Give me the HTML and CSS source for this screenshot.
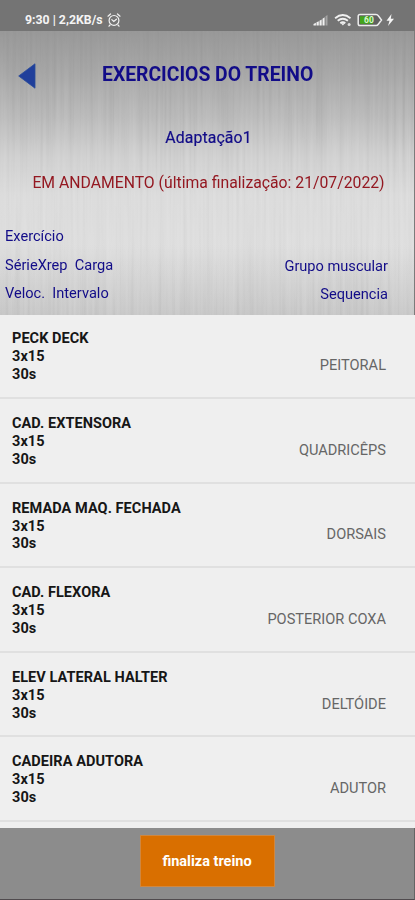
FILE: index.html
```html
<!DOCTYPE html>
<html lang="pt-BR">
<head>
<meta charset="utf-8">
<title>Exercicios do treino</title>
<link rel="stylesheet" href="styles.css">
</head>
<body>
<div class="app">
  <div class="status">
    <span class="clock">9:30 | 2,2KB/s</span>
    <svg class="alarm" width="14" height="14" viewBox="0 0 14 14" fill="none" stroke="#f2f2f2" stroke-width="1.2" stroke-linecap="round"><circle cx="7" cy="7.4" r="4.9"/><path d="M1 3.2 3.5 1M13 3.2 10.5 1M3 12l-1 1.2M11 12l1 1.2M4.8 6.6 6.8 8.4 9.4 6.2"/></svg>
    <svg class="icons" width="84" height="16" viewBox="0 0 84 16">
      <g transform="translate(1.5 0)">
        <g fill="#f0f0f0"><path d="M1 13.5v-1.6l2.4-1.2v2.8zM4 13.5v-3.2l2.3-1.1v4.3zM7 13.5V8.7l2.2-1.3v6.1zM10 13.5V6.7l2.1-1.5v8.3z"/><path d="M13 13.5V4.3l2-1.3v10.5z" opacity=".4"/></g>
        <g fill="none" stroke="#f0f0f0" stroke-width="1.8"><path d="M22.6 6.2q7.7-6.4 15.4 0M25.2 8.8q5.1-4.2 10.2 0M27.8 11.2q2.5-2 5 0"/></g>
        <path d="m28.4 11.2 2 2.4 2-2.4z" fill="#f0f0f0"/><circle cx="36.6" cy="12.4" r="1.5" fill="#ddd"/>
      </g>
      <path d="M49 2.5h16q1.5 0 2.5 1.5l3 4-3 4q-1 1.5-2.5 1.5H49q-1.8 0-1.8-1.8V4.3q0-1.8 1.8-1.8z" fill="#606060" stroke="#ededed" stroke-width="1.5"/>
      <path d="M49 4.3h13v7.5H49z" fill="#43a51b"/>
      <text x="53" y="11.1" class="charge">60</text>
      <path d="m80.5 2-5 6.8h3L77 14l6-7.2h-3.2z" fill="#f5f5f5"/>
    </svg>
  </div>
  <header class="header">
    <svg class="brushed" width="414" height="284">
      <filter id="grain" x="0" y="0" width="100%" height="100%" color-interpolation-filters="sRGB">
        <feTurbulence type="fractalNoise" baseFrequency="0.3 0.006" numOctaves="2" seed="8"/>
        <feColorMatrix values="1.1 0 0 0 -.05  1.1 0 0 0 -.05  1.1 0 0 0 -.05  0 0 0 0 1"/>
      </filter>
      <rect width="414" height="284" filter="url(#grain)"/>
    </svg>
    <div class="titlebar">
      <svg class="back" width="18" height="26" viewBox="0 0 18 26"><path d="M.7 13 17 .8v24.4z" fill="#203f9b" stroke="#294b9a" stroke-width=".8"/></svg>
      <h1 class="title">EXERCICIOS DO TREINO</h1>
    </div>
    <div class="plan">Adaptação1</div>
    <div class="progress">EM ANDAMENTO (última finalização: 21/07/2022)</div>
    <div class="legend">
      <div class="legend-left"><span>Exercício</span><span>SérieXrep&nbsp; Carga</span><span>Veloc.&nbsp; Intervalo</span></div>
      <div class="legend-right"><span>Grupo muscular</span><span>Sequencia</span></div>
    </div>
  </header>
  <main class="list">
    <div class="row"><div class="exercise"><b>PECK DECK</b><b>3x15</b><b>30s</b></div><span class="muscle">PEITORAL</span></div>
    <div class="row"><div class="exercise"><b>CAD. EXTENSORA</b><b>3x15</b><b>30s</b></div><span class="muscle">QUADRICÊPS</span></div>
    <div class="row"><div class="exercise"><b>REMADA MAQ. FECHADA</b><b>3x15</b><b>30s</b></div><span class="muscle">DORSAIS</span></div>
    <div class="row"><div class="exercise"><b>CAD. FLEXORA</b><b>3x15</b><b>30s</b></div><span class="muscle">POSTERIOR COXA</span></div>
    <div class="row"><div class="exercise"><b>ELEV LATERAL HALTER</b><b>3x15</b><b>30s</b></div><span class="muscle">DELTÓIDE</span></div>
    <div class="row"><div class="exercise"><b>CADEIRA ADUTORA</b><b>3x15</b><b>30s</b></div><span class="muscle">ADUTOR</span></div>
  </main>
  <footer class="footer"><button class="finish">finaliza treino</button></footer>
</div>
</body>
</html>
```
FILE: styles.css
```css
* { box-sizing: border-box; }
body { margin: 0; font-family: Roboto, "Liberation Sans", sans-serif; background: #8c8c8c; }
.app { width: 415px; height: 900px; display: flex; flex-direction: column; overflow: hidden; }
.status { height: 31px; flex: none; background: #747474; display: flex; align-items: center; padding: 8px 20px 0 25px; color: #f4f4f4; }
.clock { font-size: 12.3px; font-weight: 700; white-space: nowrap; width: 82px; }
.icons { margin-left: auto; }
.charge { font: 700 8.5px Roboto, sans-serif; fill: #d9f5cd; }
.header {
  position: relative; isolation: isolate;
  height: 284px; flex: none; color: #120c88; border-right: 1px solid #7b7b7b;
  background:
    linear-gradient(0deg, rgba(180,180,180,.55) 0, rgba(200,200,200,0) 70px),
    linear-gradient(180deg, #989898 0, #a6a6a6 40px, #bababa 85px, #d0d0d0 125px, #dcdcdc 165px, #e0e0e0 100%);
}
.brushed {
  position: absolute; inset: 0; z-index: -1; opacity: .24; mix-blend-mode: soft-light;
  -webkit-mask-image: linear-gradient(180deg, rgba(0,0,0,.25) 0, #000 110px);
  mask-image: linear-gradient(180deg, rgba(0,0,0,.25) 0, #000 110px);
}
.titlebar { height: 88px; display: flex; align-items: center; padding-left: 18px; }
.back { flex: none; margin-top: 2px; }
.title { margin: 0 0 0 66px; font-size: 19.35px; line-height: 24px; font-weight: 700; white-space: nowrap; }
.plan { height: 37px; line-height: 37px; font-size: 15.8px; text-align: center; letter-spacing: .12px; padding-left: 3px; -webkit-text-stroke: .2px #120c88; }
.progress { height: 54px; line-height: 54px; font-size: 15.75px; color: #941821; text-align: center; white-space: nowrap; padding-left: 3px; }
.legend { display: flex; justify-content: space-between; padding: 12px 26px 0 5px; font-size: 14.6px; line-height: 28.5px; white-space: nowrap; }
.legend span { display: block; }
.legend-right { text-align: right; padding-top: 29.5px; }
.list { height: 513px; flex: none; background: #efefef; }
.row { height: 84.6px; border-bottom: 2px solid #e0e0e0; padding: 16px 29px 0 12px; display: flex; justify-content: space-between; }
.row:first-child { margin-top: -.6px; }
.exercise b { display: block; font-size: 14.5px; line-height: 17.9px; letter-spacing: .06px; color: #161616; white-space: nowrap; }
.muscle { font-size: 14.6px; line-height: 18px; padding-top: 25.8px; color: #666; }
.footer { flex: 1; background: #8c8c8c; border-right: 1px solid #646464; border-bottom: 1px solid #504b4e; display: flex; justify-content: center; align-items: flex-start; padding-top: 7px; }
.finish { width: 135px; height: 52px; border: 1px solid #cf8740; background: #d96f00; color: #fff; font: 700 14.5px Roboto, sans-serif; padding: 0; }
```
